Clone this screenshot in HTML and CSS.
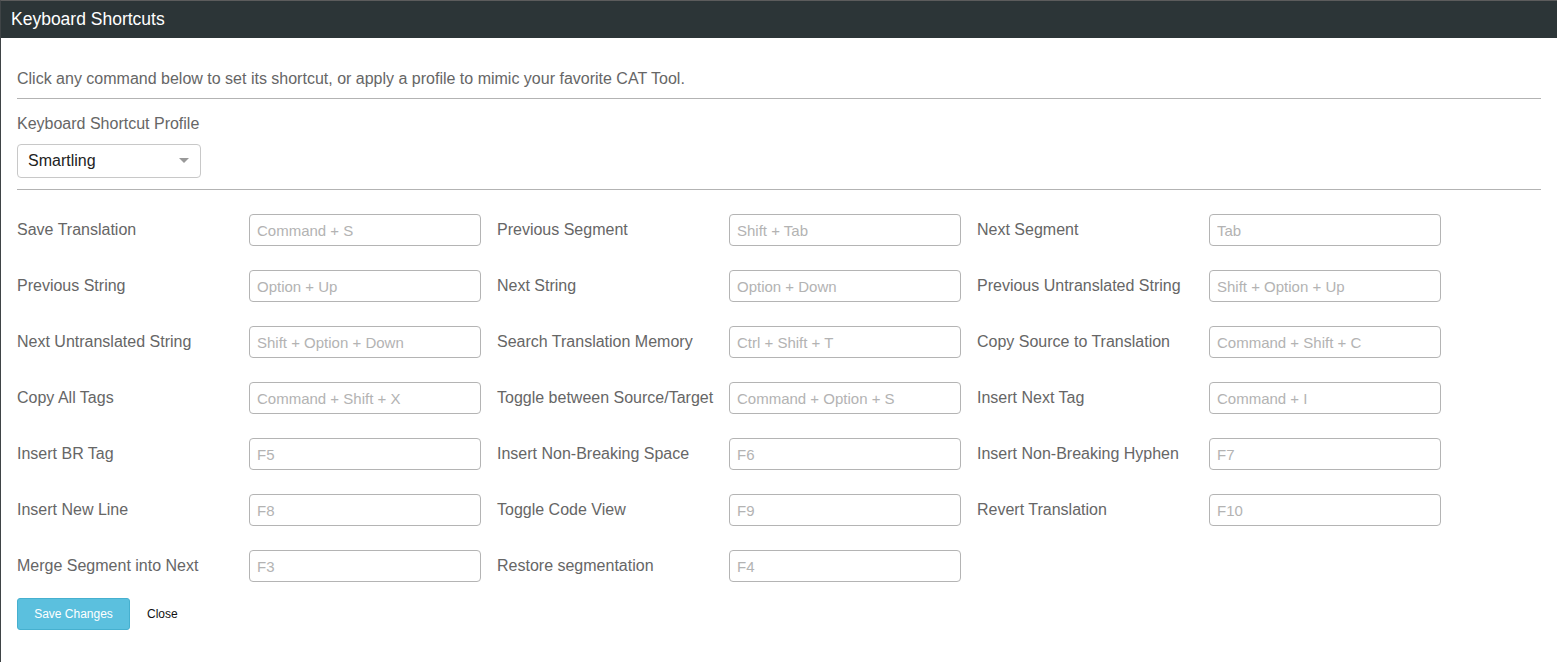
FILE: index.html
```html
<!DOCTYPE html>
<html lang="en">
<head>
<meta charset="utf-8">
<title>Keyboard Shortcuts</title>
<link rel="stylesheet" href="styles.css">
</head>
<body>
<div class="modal">
  <div class="modal-header">Keyboard Shortcuts</div>
  <div class="modal-body">
    <p class="intro">Click any command below to set its shortcut, or apply a profile to mimic your favorite CAT Tool.</p>
    <hr class="rule">
    <div class="profile">
      <label class="profile-label">Keyboard Shortcut Profile</label>
      <div class="select">
        <span>Smartling</span>
        <span class="caret"></span>
      </div>
    </div>
    <hr class="rule">
    <div class="grid">
      <div class="cell"><span class="name">Save Translation</span><input class="key" placeholder="Command + S"></div>
      <div class="cell"><span class="name">Previous Segment</span><input class="key" placeholder="Shift + Tab"></div>
      <div class="cell"><span class="name">Next Segment</span><input class="key" placeholder="Tab"></div>

      <div class="cell"><span class="name">Previous String</span><input class="key" placeholder="Option + Up"></div>
      <div class="cell"><span class="name">Next String</span><input class="key" placeholder="Option + Down"></div>
      <div class="cell"><span class="name">Previous Untranslated String</span><input class="key" placeholder="Shift + Option + Up"></div>

      <div class="cell"><span class="name">Next Untranslated String</span><input class="key" placeholder="Shift + Option + Down"></div>
      <div class="cell"><span class="name">Search Translation Memory</span><input class="key" placeholder="Ctrl + Shift + T"></div>
      <div class="cell"><span class="name">Copy Source to Translation</span><input class="key" placeholder="Command + Shift + C"></div>

      <div class="cell"><span class="name">Copy All Tags</span><input class="key" placeholder="Command + Shift + X"></div>
      <div class="cell"><span class="name">Toggle between Source/Target</span><input class="key" placeholder="Command + Option + S"></div>
      <div class="cell"><span class="name">Insert Next Tag</span><input class="key" placeholder="Command + I"></div>

      <div class="cell"><span class="name">Insert BR Tag</span><input class="key" placeholder="F5"></div>
      <div class="cell"><span class="name">Insert Non-Breaking Space</span><input class="key" placeholder="F6"></div>
      <div class="cell"><span class="name">Insert Non-Breaking Hyphen</span><input class="key" placeholder="F7"></div>

      <div class="cell"><span class="name">Insert New Line</span><input class="key" placeholder="F8"></div>
      <div class="cell"><span class="name">Toggle Code View</span><input class="key" placeholder="F9"></div>
      <div class="cell"><span class="name">Revert Translation</span><input class="key" placeholder="F10"></div>

      <div class="cell"><span class="name">Merge Segment into Next</span><input class="key" placeholder="F3"></div>
      <div class="cell"><span class="name">Restore segmentation</span><input class="key" placeholder="F4"></div>
    </div>
    <div class="actions">
      <button class="btn-save">Save Changes</button>
      <button class="btn-close">Close</button>
    </div>
  </div>
</div>
</body>
</html>
```

FILE: styles.css
```css
html, body {
  margin: 0;
  padding: 0;
  background: #ffffff;
  height: 100%;
}

body {
  font-family: "Liberation Sans", Arial, sans-serif;
}

.modal {
  box-sizing: border-box;
  height: 662px;
  border-top: 1px solid #5c5c5c;
  border-left: 1px solid #3f4446;
  display: flex;
  flex-direction: column;
  overflow: hidden;
}

.modal-header {
  height: 37px;
  background: #2c3537;
  color: #ffffff;
  font-size: 17.5px;
  line-height: 37px;
  padding-left: 10px;
  flex: none;
}

.modal-body {
  padding: 30px 16px 0 16px;
}

.intro {
  margin: 0;
  font-size: 16px;
  line-height: 21px;
  color: #666666;
}

.rule {
  margin: 9px 0 0 0;
  border: 0;
  height: 1px;
  background: #b3b3b3;
}

.profile {
  display: flex;
  flex-direction: column;
  align-items: flex-start;
  padding-top: 15px;
  padding-bottom: 11px;
}

.profile + .rule {
  margin-top: 0;
}

.profile-label {
  font-size: 16px;
  line-height: 20px;
  color: #666666;
}

.select {
  margin-top: 10px;
  box-sizing: border-box;
  width: 184px;
  height: 34px;
  border: 1px solid #c8c8c8;
  border-radius: 4px;
  display: flex;
  align-items: center;
  justify-content: space-between;
  padding: 0 11px 0 10px;
  font-size: 16px;
  color: #222222;
}

.caret {
  width: 0;
  height: 0;
  border-left: 5px solid transparent;
  border-right: 5px solid transparent;
  border-top: 5px solid #999999;
  margin-bottom: 2px;
}

.grid {
  display: grid;
  grid-template-columns: repeat(3, 464px);
  column-gap: 16px;
  row-gap: 24px;
  padding-top: 24px;
}

.cell {
  display: grid;
  grid-template-columns: 232px 232px;
  align-items: center;
  height: 32px;
}

.name {
  font-size: 16px;
  color: #666666;
  white-space: nowrap;
}

.key {
  box-sizing: border-box;
  width: 232px;
  height: 32px;
  border: 1px solid #b4b4b4;
  border-radius: 4px;
  padding: 0 7px;
  font-family: "Liberation Sans", Arial, sans-serif;
  font-size: 15px;
  color: #333333;
  background: #ffffff;
  outline: none;
}

.key::placeholder {
  color: #b3b3b3;
}

.actions {
  display: flex;
  align-items: center;
  gap: 17px;
  padding-top: 16px;
}

.btn-save {
  box-sizing: border-box;
  width: 113px;
  height: 32px;
  background: #5bc0de;
  border: 1px solid #46b0cf;
  border-radius: 3px;
  color: #ffffff;
  font-family: "Liberation Sans", Arial, sans-serif;
  font-size: 12px;
  padding: 0;
}

.btn-close {
  background: none;
  border: 0;
  padding: 0;
  font-family: "Liberation Sans", Arial, sans-serif;
  font-size: 12px;
  color: #111111;
}
```
